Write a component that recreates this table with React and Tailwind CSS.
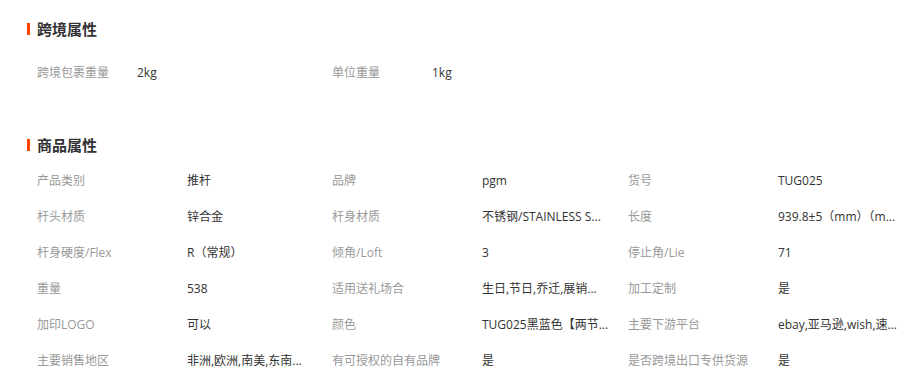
const crossBorder = [
  ["跨境包裹重量", "2kg"],
  ["单位重量", "1kg"],
];

// values are shown already shortened, as on the page
const attrs = [
  ["产品类别", "推杆"],
  ["品牌", "pgm"],
  ["货号", "TUG025"],
  ["杆头材质", "锌合金"],
  ["杆身材质", "不锈钢/STAINLESS S..."],
  ["长度", "939.8±5（mm）（m..."],
  ["杆身硬度/Flex", "R（常规）"],
  ["倾角/Loft", "3"],
  ["停止角/Lie", "71"],
  ["重量", "538"],
  ["适用送礼场合", "生日,节日,乔迁,展销..."],
  ["加工定制", "是"],
  ["加印LOGO", "可以"],
  ["颜色", "TUG025黑蓝色【两节..."],
  ["主要下游平台", "ebay,亚马逊,wish,速..."],
  ["主要销售地区", "非洲,欧洲,南美,东南..."],
  ["有可授权的自有品牌", "是"],
  ["是否跨境出口专供货源", "是"],
];

const Title = ({ children }) => (
  <div className="flex items-center h-5 pl-[27px]">
    <span className="w-[3px] h-3 bg-[#ff4400]" />
    <h2 className="ml-[7px] text-[15px] font-bold text-[#333] leading-5">{children}</h2>
  </div>
);

export default function App() {
  return (
    <div
      className="w-[922px] h-[381px] bg-white overflow-hidden pt-[19px] text-[12px]"
      style={{ fontFamily: '"Open Sans", "Noto Sans CJK SC", sans-serif' }}
    >
      {/* 跨境属性 */}
      <Title>跨境属性</Title>
      <div className="mt-4 grid grid-cols-[295px_296px_1fr] pl-[37px]">
        {crossBorder.map(([k, v]) => (
          <div key={k} className="flex items-center h-9">
            <span className="w-[100px] text-[#999] whitespace-nowrap">{k}</span>
            <span className="text-[#333]">{v}</span>
          </div>
        ))}
      </div>

      {/* 商品属性 */}
      <div className="mt-[44px]">
        <Title>商品属性</Title>
      </div>
      <div className="mt-2 grid grid-cols-[295px_296px_1fr] pl-[37px]">
        {attrs.map(([k, v]) => (
          <div key={k} className="flex items-center h-9">
            <span className="w-[150px] text-[#999] whitespace-nowrap">{k}</span>
            <span className="text-[#333] whitespace-nowrap">{v}</span>
          </div>
        ))}
      </div>
    </div>
  );
}
